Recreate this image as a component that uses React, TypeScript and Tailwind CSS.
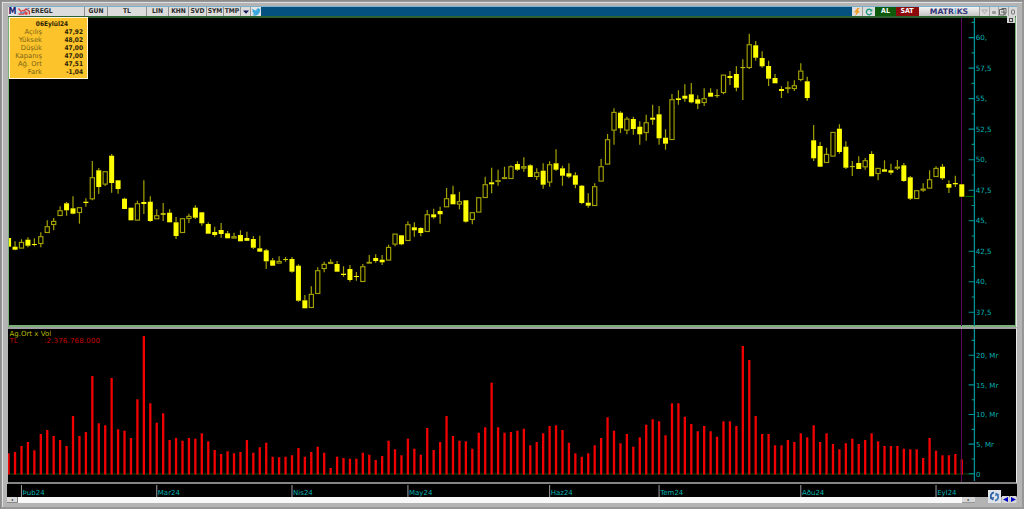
type Candle = [high: number, top: number, bottom: number, low: number, hollow?: 1];

const STEP = 6.4405;
const FIRST_X = 8.6;
const barX = (i: number) => FIRST_X + i * STEP;

const candles: Candle[] = [
  [238, 238, 246.7, 246.7], [241.3, 246.7, 249.7, 250.3], [239.3, 242, 248.3, 248.3, 1], [237.3, 239.7, 245.7, 247.3],
  [238.3, 244, 245, 246.3], [232.3, 236.3, 243.7, 247.3, 1], [220.3, 226.3, 232.7, 232.7, 1], [218, 221, 224.7, 230.3, 1],
  [206.3, 210.3, 215.7, 215.7, 1], [202, 203.3, 210.3, 215.7], [196.3, 208.3, 213.7, 214.3], [207.3, 207.3, 212.7, 223.7, 1],
  [198.3, 201.7, 203, 206.7], [161, 177.3, 199, 200.3, 1], [168, 170.3, 187, 194], [171.3, 171.3, 184.3, 186, 1],
  [154, 155.7, 183, 192.7], [180.3, 180.3, 189, 193.7], [197.7, 198.7, 209, 209], [207.7, 207.7, 220.3, 220.3],
  [200.7, 203.3, 220.3, 220.3, 1], [180.3, 202, 204, 214], [196.3, 201.7, 221, 221.7], [209.3, 215.3, 219, 219, 1],
  [203, 213.3, 214.7, 221], [209.3, 212.7, 222.3, 222.3], [217, 222.3, 236, 239], [218.3, 218.3, 232.7, 232.7, 1],
  [213.7, 216, 218.7, 223, 1], [205.3, 207.7, 217.7, 219], [212.3, 212.3, 223.3, 225.7], [222.3, 224, 233.7, 233.7],
  [226.7, 232, 235, 236.7], [223, 230, 234, 237.7], [231, 233.3, 238.3, 238.3], [232.7, 236.3, 238.3, 238.3, 1],
  [230.3, 235, 241.3, 241.3], [231.7, 238, 240.8, 240.8], [236, 239, 247.7, 249], [235.7, 248.3, 251.7, 251.7],
  [249, 250.3, 261.3, 269], [258, 260.3, 265.7, 265.7], [256.3, 261, 263.3, 263.3, 1], [257, 259, 259.8, 261.7],
  [257, 259, 271.7, 272.7], [264.3, 265.7, 300.7, 301.7], [295, 300.3, 308.3, 308.3], [286.3, 294, 307.7, 307.7, 1],
  [267.3, 270.3, 293.7, 293.7, 1], [261.7, 264, 268.7, 272.3, 1], [259.3, 262, 263.7, 263.7, 1], [261, 264, 271.7, 271.7],
  [266.3, 273.7, 275, 276.7], [265, 269, 280, 281.7], [272, 276, 277, 280.7], [264, 266.3, 281.7, 281.7, 1],
  [255, 262, 263.3, 263.3, 1], [254.3, 258, 261, 262.7], [255, 259.7, 262.3, 265], [244.7, 247, 260.3, 260.3, 1],
  [233.7, 233.7, 244.3, 246.3, 1], [235.3, 235.3, 244.3, 245.3], [221.2, 224.3, 240.7, 240.7, 1], [222.3, 227.3, 230.3, 236.7],
  [227.3, 228, 233, 236.3], [210, 214.3, 231.7, 231.7, 1], [208.7, 214.3, 217.3, 218.7], [206.7, 211, 214.3, 223.7],
  [188, 198.3, 207, 207, 1], [185.7, 194.3, 204.3, 204.3], [191.7, 201.3, 204.3, 209.3, 1], [200.3, 200.3, 221.7, 222.7],
  [212.3, 212.3, 219.7, 224.3, 1], [197.3, 197.3, 212.3, 212.3, 1], [176.7, 184.3, 197.7, 197.7, 1], [167.7, 182.3, 184.3, 193.3],
  [169.7, 180.3, 181.3, 185.7, 1], [166.7, 177.3, 178.7, 178.7, 1], [165.3, 166.3, 178.7, 178.7, 1], [161.3, 164, 169.7, 170.7],
  [157.3, 166.3, 168.3, 171.7, 1], [164.3, 165.3, 177, 177], [168.3, 172.3, 176.7, 180, 1], [163.3, 170.7, 184.7, 188.7],
  [161.3, 164.3, 182.3, 186.7, 1], [149.3, 163.3, 169.7, 171], [165.7, 168.3, 175.7, 185.7], [163.3, 173.3, 176.7, 178.3],
  [172.3, 175.3, 184.7, 188.3], [185, 185.7, 203, 204.3], [193.3, 202.7, 205.7, 207.7], [183.3, 186.3, 205.7, 205.7, 1],
  [159, 166.3, 181.3, 181.3, 1], [134, 139.3, 164.3, 164.3, 1], [108.3, 112, 130.3, 144.7, 1], [111.3, 112.7, 128.3, 133],
  [116.7, 118.7, 130.3, 134.3, 1], [116.7, 119, 129, 134.7], [121.3, 126.7, 134.3, 144.7], [114.7, 122.3, 132.7, 140.7, 1],
  [104.7, 117.7, 119.7, 124.7], [106, 114.3, 138.3, 144.7], [129.3, 137.7, 143.7, 149.7], [94, 99.3, 139.7, 139.7, 1],
  [90.3, 98.3, 100, 104.7], [84.3, 95.7, 98.7, 101.7], [83, 94.3, 102.3, 103.3], [95.3, 99.3, 103.7, 109],
  [88.3, 98.3, 102.7, 106, 1], [88.3, 92.7, 96.7, 96.7], [89.3, 95.3, 96, 97.7], [74.7, 74.7, 92.7, 94.3, 1],
  [71, 76, 78, 85], [66.3, 74, 87.7, 91.3], [59.3, 67.3, 68, 100], [33.7, 44.3, 67.7, 69, 1],
  [41, 45.3, 57.7, 60.7], [51.3, 58, 66.3, 67.7], [60.7, 66, 78.7, 86], [74, 78, 83.3, 83.3],
  [86.3, 89, 91, 98], [81.3, 87.3, 88.7, 93.3, 1], [80.3, 85.3, 88.7, 91, 1], [63.3, 70.7, 79.7, 81.3, 1],
  [76.7, 81.3, 98, 100.7], [125, 140.3, 158.3, 161], [142, 146, 166.7, 166.7], [147.7, 154, 162.7, 162.7, 1],
  [132, 132, 156.3, 156.3, 1], [124.3, 128.7, 152, 153.7], [141.3, 146.7, 167.7, 169], [161, 166.3, 167, 176],
  [156.3, 163, 169, 169], [158, 160.3, 167, 169.7, 1], [151.3, 154, 176.3, 176.3], [168, 168, 173.7, 180.3, 1],
  [160.3, 169.3, 171.7, 171.7], [163.7, 170.3, 172.7, 174.7], [160, 166.7, 168.3, 170, 1], [163, 165.3, 181, 181.7],
  [176, 177.3, 198.7, 200], [190.3, 190.3, 198.7, 198.7, 1], [183.3, 188.7, 190.3, 191.7, 1], [170.3, 179.3, 188.3, 188.3, 1],
  [166.3, 168, 176.7, 176.7, 1], [164, 166.7, 178.3, 180], [180.3, 184, 187.7, 193], [175.7, 183, 184.3, 187],
  [184.3, 184.3, 196.7, 196.7],
];

// top edge of every volume bar
const volumes = [
  453.3, 452, 446, 442, 450.3, 434, 430, 436, 440, 446, 416, 436, 432, 376, 423.3, 425.3, 378, 429.3, 430.7, 438,
  399.3, 336, 403.3, 422.7, 413.3, 440, 438, 440.7, 438, 438.7, 433.3, 441.3, 450, 454, 451.3, 453.3, 452, 440, 452.7, 447.3,
  442.7, 456.7, 457.3, 456.7, 455.3, 448, 456.7, 452, 446.7, 452.7, 468, 456.7, 458, 458.7, 458.7, 452.7, 454.7, 460, 456, 440.7,
  449.3, 455.3, 438.7, 448.7, 454.7, 428, 450, 442, 416, 436, 440.7, 441.3, 448.7, 432.7, 427.3, 382.7, 427.3, 432.7, 432, 430.7,
  428.7, 445.3, 442, 433.3, 426, 425.3, 430, 442.7, 453.3, 456.7, 453.3, 445.3, 438, 417.3, 430.7, 443.3, 434, 446.7, 437.3, 424.7,
  419.3, 421.3, 435.3, 403.3, 403.3, 416.7, 424, 431.3, 426, 431.3, 436.7, 421.3, 421.3, 426, 346, 360, 416, 434, 434, 445.3,
  445.3, 440, 442, 433.3, 437.3, 425.3, 442, 433.3, 444, 449.3, 443.3, 438.7, 444, 440, 433.3, 441.3, 446, 446, 446, 448.7,
  449.3, 449.3, 458, 438, 450.7, 455.3, 455.3, 454, 459.3,
];

const priceTicks = [
  "60,", "57,5", "55,", "52,5", "50,", "47,5", "45,", "42,5", "40,", "37,5",
].map((label, i) => ({ label, y: 37.6 + i * 30.52 }));

const volumeTicks = ["20, Mr", "15, Mr", "10, Mr", "5, Mr", "0"].map((label, i) => ({
  label,
  y: 355.2 + i * 29.65,
}));

const months = [
  { label: "Þub24", bar: 2 },
  { label: "Mar24", bar: 23 },
  { label: "Nis24", bar: 44 },
  { label: "May24", bar: 62 },
  { label: "Haz24", bar: 84 },
  { label: "Tem24", bar: 101 },
  { label: "Aðu24", bar: 123 },
  { label: "Eyl24", bar: 144 },
];

const quote = [
  ["Açılış", "47,92"],
  ["Yüksek", "48,02"],
  ["Düşük", "47,00"],
  ["Kapanış", "47,00"],
  ["Ağ. Ort", "47,51"],
  ["Fark", "-1,04"],
];

const toolButtons = [
  { label: "EREGL", width: "w-[54px] justify-start" },
  { label: "GUN", width: "w-[23px] justify-center" },
  { label: "TL", width: "w-[39px] justify-center" },
  { label: "LIN", width: "w-[22px] justify-center" },
  { label: "KHN", width: "w-[20px] justify-center" },
  { label: "SVD", width: "w-[18px] justify-center" },
  { label: "SYM", width: "w-[17px] justify-center" },
  { label: "TMP", width: "w-[17px] justify-center" },
];

const Toolbar = () => (
  <header className="flex h-[10px] shrink-0 items-stretch border-t border-[#7fb0cc] bg-[#045180] font-['DejaVu_Sans_Condensed','DejaVu_Sans',sans-serif] text-[6.7px] leading-none font-bold text-[#2c2c2c]">
    <div className="flex w-[9px] items-center justify-center bg-[#e4e4ee] font-['DejaVu_Sans',sans-serif] text-[8px] text-[#1b1f6b]">M</div>
    <div className="flex w-[14px] items-center bg-[#dcdcdc] pl-px">
      <svg width="12" height="9" viewBox="0 0 12 9" fill="none">
        <path d="M.5 1.500 L3 4.500 L5.500 3 M.5 7 H6" stroke="#d94040" strokeWidth="1.300" />
        <path d="M5.500 4.500 L8 2 L11.500 4.500 V7.500" stroke="#cc3a3a" strokeWidth="1.400" />
        <path d="M2 5.700 L5 6 L8 4.500 M9 2.500 L11.300 1" stroke="#557fc8" strokeWidth="1.200" />
        <circle cx="8" cy="6.300" r="1.700" fill="#e04848" />
      </svg>
    </div>
    {toolButtons.map((b) => (
      <div key={b.label} className={`flex items-center border-r border-[#8f8f8f] bg-[#dcdcdc] ${b.width}`}>
        {b.label}
      </div>
    ))}
    <div className="flex w-[10px] items-center justify-center border-r border-[#999] bg-[#dcdcdc]">
      <svg width="6" height="4" viewBox="0 0 6 4"><path d="M0 .5H6L3 3.8Z" fill="#15155a" /></svg>
    </div>
    <div className="flex w-[10px] items-center justify-center bg-[#e4e4e4]">
      <svg width="9" height="8" viewBox="0 0 24 20" fill="#39a9e0">
        <path d="M23.9 2.4a9.800 9.800 0 0 1-2.800.800 4.900 4.900 0 0 0 2.100-2.700 9.800 9.800 0 0 1-3.100 1.200 4.900 4.900 0 0 0-8.400 4.500A14 14 0 0 1 1.600 1a4.900 4.900 0 0 0 1.500 6.600 4.900 4.900 0 0 1-2.200-.600 4.900 4.900 0 0 0 3.900 4.900 5 5 0 0 1-2.200.100 4.900 4.900 0 0 0 4.600 3.400A9.900 9.900 0 0 1 0 17.400 14 14 0 0 0 21.500 5Z" />
      </svg>
    </div>
    <div className="flex-1" />
    <div className="flex w-[11px] items-center justify-center border-r border-[#999] bg-[#dcdcdc]">
      <svg width="8" height="8" viewBox="0 0 8 8"><path d="M4.500 0 L1 4.500 H3.500 L2 8 L7 3 H4.600 L6.500 0Z" fill="#f39a1d" /></svg>
    </div>
    <div className="flex w-[12px] items-center justify-center bg-[#dcdcdc]">
      <svg width="8" height="8" viewBox="0 0 8 8" fill="none">
        <path d="M6.300 2.400 A2.700 2.700 0 1 0 6.600 5" stroke="#1c9c86" strokeWidth="1.400" />
        <path d="M7.300 .8 V3.600 H4.500Z" fill="#1c9c86" />
      </svg>
    </div>
    <div className="flex w-[21px] items-center justify-center bg-[#0d5a0d] text-[7px] text-white">AL</div>
    <div className="flex w-[23px] items-center justify-center bg-[#8c0a0a] pr-px text-[7px] text-white">SAT</div>
    <div className="flex w-[60px] items-center justify-center bg-linear-to-b from-[#f4f4f4] to-[#c4c4c4] font-['DejaVu_Sans',sans-serif] text-[7.7px] text-[#34347a]">
      MATR<span className="text-[#4aa3d8]">i</span>KS
    </div>
    <div className="flex w-[38px] gap-px bg-[#a4a4a4] pl-px">
      <span className="flex flex-1 items-center justify-center bg-[#dadada]">
        <svg width="7" height="6" viewBox="0 0 7 6" fill="none"><path d="M.8 1H6.200L3.500 4.500Z" stroke="#aaa" /></svg>
      </span>
      <span className="flex flex-1 items-center justify-center bg-[#dadada]">
        <svg width="6" height="6" viewBox="0 0 6 6"><rect x="1" y="2" width="4" height="3" rx="1" fill="#999" /></svg>
      </span>
      <span className="flex flex-1 items-center justify-center bg-[#dadada]">
        <svg width="8" height="8" viewBox="0 0 8 8" fill="none" stroke="#444" strokeWidth=".8"><path d="M.5 1.500H5V7H.5ZM2.500 .5H7V5.500M2 4H5M6 4V7.500" /></svg>
      </span>
      <span className="flex flex-1 items-center justify-center bg-[#dadada]">
        <svg width="6" height="6" viewBox="0 0 6 6" fill="none"><rect x="1.500" y="1" width="3" height="4" rx=".5" stroke="#777" /></svg>
      </span>
    </div>
  </header>
);

const PricePane = () => (
  <svg className="block" width="1006" height="308" viewBox="9 18 1006 308">
    <path d="M961.5 17V327" stroke="#5c085c" />
    {candles.map(([high, top, bottom, low, hollow], i) => {
      const x = barX(i);
      return (
        <g key={i}>
          <path d={`M${x} ${high}V${top}M${x} ${bottom}V${low}`} stroke="#a3a200" strokeWidth="1.200" />
          {hollow ? (
            <rect x={x - 2.1} y={top + 0.4} width="4.2" height={Math.max(bottom - top - 0.6, 0.6)} fill="none" stroke="#a3a200" strokeWidth="1.150" />
          ) : (
            <rect x={x - 2.5} y={top} width="5" height={Math.max(bottom - top, 0.8)} fill="#ffff00" />
          )}
        </g>
      );
    })}
    <path d="M965.5 196.4H974" stroke="#007a00" />
    <path d="M974.4 17V327" stroke="#009494" strokeWidth="1.300" />
    {priceTicks.map(({ label, y }) => (
      <g key={label}>
        <path d={`M968.700 ${y}H974M971.700 ${y - 15.26}H974`} stroke="#009494" strokeWidth="1.100" />
        <text x="975.700" y={y + 2.7} fill="#00b4b4" className="font-['DejaVu_Sans',sans-serif] text-[7.2px]">{label}</text>
      </g>
    ))}
  </svg>
);

const VolumePane = () => (
  <svg className="block" width="1008" height="153" viewBox="8 329 1008 153">
    <path d="M8 474H974" stroke="#073007" strokeWidth="1.300" />
    {volumes.map((y, i) => (
      <rect key={i} x={barX(i) - 1.15} y={y} width="2.300" height={474.6 - y} fill="#f20000" />
    ))}
    <path d="M961.500 329V482" stroke="#5c085c" />
    <path d="M974.400 329V481" stroke="#009494" strokeWidth="1.300" />
    {volumeTicks.map(({ label, y }) => (
      <g key={label}>
        <path d={`M968.700 ${y}H974M971.700 ${y - 14.8}H974`} stroke="#009494" strokeWidth="1.100" />
        <text x="976" y={y + 2.7} fill="#00b4b4" className="font-['DejaVu_Sans',sans-serif] text-[7px]">{label}</text>
      </g>
    ))}
    <g className="font-['DejaVu_Sans',sans-serif] text-[7px]">
      <text x="9.500" y="335.600" fill="#b8b800">Ag.Ort x Vol</text>
      <text x="9.500" y="343.100" fill="#c80000">TL</text>
      <text x="44" y="343.100" fill="#c80000" textLength="56">:2.376.768.000</text>
    </g>
  </svg>
);

const TimeAxis = () => (
  <svg className="block" width="1010" height="13" viewBox="7 484 1010 13">
    {months.map(({ label, bar }) => (
      <g key={label}>
        <path d={`M${barX(bar)} 485V497`} stroke="#909090" strokeWidth="1.100" />
        <text x={barX(bar) + 1.1} y="494.800" fill="#00b4b4" className="font-['DejaVu_Sans',sans-serif] text-[7px]">{label}</text>
      </g>
    ))}
  </svg>
);

const QuoteBox = () => (
  <div className="absolute -top-px left-0 w-[79px] border border-[#fff6dc] bg-[#fcc42a] px-[4px] pt-[2px] pb-[2px] text-[6.8px] leading-[8px]">
    <div className="pl-[7px] text-center font-['DejaVu_Sans_Condensed','DejaVu_Sans',sans-serif] text-[6.5px] font-bold text-[#2c2205]">06Eylül24</div>
    {quote.map(([name, value]) => (
      <div key={name} className="flex">
        <span className="flex w-[28px] justify-end whitespace-nowrap text-[#7c6418]">{name}</span>
        <span className="flex-1 text-right font-['DejaVu_Sans_Condensed','DejaVu_Sans',sans-serif] text-[6.5px] font-bold text-[#2c2205]">{value}</span>
      </div>
    ))}
  </div>
);

const App = () => {
  return (
    <div className="flex h-[509px] w-[1024px] flex-col overflow-hidden border-t border-l border-[#8c8c8c] bg-[#b4b4b4] font-['DejaVu_Sans',sans-serif]">
      <div className="flex flex-1 flex-col border border-r-2 border-b-2 border-[#979797]">
        <div className="flex flex-1 flex-col border-t border-l border-[#dedede] pt-[3px] pr-[4px] pl-[4px]">
          <div className="pr-px pl-px">
            <Toolbar />
          </div>

          {/* Price chart */}
          <div className="flex">
            <div className="ml-px h-[311px] w-[1008px] border border-t-2 border-b-2 border-[#78b078] border-t-[#2f6233] bg-black">
              <div className="relative">
                <PricePane />
                <QuoteBox />
                <div className="absolute -top-[2px] right-0 flex h-[7px] w-[8px] items-center justify-center bg-[#d4d4d4]">
                  <span className="block h-[4px] w-[4px] border border-[#444]" />
                </div>
              </div>
            </div>
            <div className="w-px bg-[#e8e8e8]" />
          </div>

          {/* Volume chart */}
          <div className="ml-px h-[157px] w-[1009px] border-t-2 border-r border-b-2 border-[#858585] border-t-[#a0a0a0] border-r-[#e8e8e8] bg-black">
            <VolumePane />
          </div>

          {/* Time axis with the scroll bar below it */}
          <div className="relative flex flex-col">
            <div className="h-[13px] w-[1010px] bg-black">
              <TimeAxis />
            </div>
            <div className="flex h-[6px] items-stretch text-[4px] leading-none text-[#333]">
              <span className="flex w-[11px] items-center justify-center border-r border-b border-[#888] bg-[#dadada]">◂</span>
              <span className="w-[944px] bg-[#f8f8f8]" />
              <span className="flex w-[13px] items-center justify-center border-b border-[#999] bg-[#d6d6d6]">▸</span>
            </div>
            <div className="absolute top-[6px] left-[981px] flex items-end gap-px">
              <svg width="13" height="13" viewBox="0 0 13 13" fill="none">
                <rect width="13" height="13" fill="#dfe3ea" />
                <path d="M6 2.300 C3 3 1.800 6 3.600 8.600" stroke="#2a5fa5" strokeWidth="1.800" />
                <path d="M1.600 8.400 L6 6.800 L5.300 10.500Z" fill="#2a5fa5" />
                <path d="M7 10.700 C10 10 11.200 7 9.400 4.400" stroke="#3f74b5" strokeWidth="1.800" />
                <path d="M11.400 4.600 L7 6.200 L7.700 2.500Z" fill="#3f74b5" />
              </svg>
              <svg width="15" height="7" viewBox="0 0 15 7">
                <rect width="7" height="7" fill="#d8d8d8" />
                <rect x="7.500" width="7" height="7" fill="#d8d8d8" />
                <path d="M6 1V6L1 3.500ZM9 1V6L14 3.500Z" fill="#0000c8" />
              </svg>
            </div>
          </div>
        </div>
      </div>
    </div>
  );
};

export default App;
